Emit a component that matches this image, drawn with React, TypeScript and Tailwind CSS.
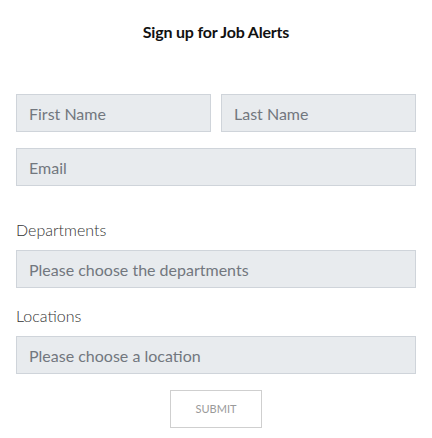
import React from "react";

export default function App() {
  const input =
    "h-[38px] w-full border border-[#cfd4da] bg-[#e8ebee] px-3 text-[16px] text-[#555] placeholder:text-[#72777e] outline-none";
  return (
    <div className="w-[432px] h-[438px] bg-white px-4 pt-[22px]" style={{ fontFamily: "Lato, 'Open Sans', sans-serif" }}>
      <h2 className="text-center text-[16px] font-bold leading-[20px] text-[#111] tracking-[-0.2px]">Sign up for Job Alerts</h2>
      <form className="mt-[52px] flex flex-col" onSubmit={(e) => e.preventDefault()}>
        <div className="flex gap-[10px]">
          <input className={input} placeholder="First Name" />
          <input className={input} placeholder="Last Name" />
        </div>
        <input className={input + " mt-4"} placeholder="Email" />
        <label className="mt-[34px] text-[16px] leading-[20px] text-[#333] font-light">Departments</label>
        <input className={input + " mt-[10px]"} placeholder="Please choose the departments" />
        <label className="mt-[18px] text-[16px] leading-[20px] text-[#333] font-light">Locations</label>
        <input className={input + " mt-[10px]"} placeholder="Please choose a location" />
        <div className="mt-4 flex justify-center">
          <button className="h-[38px] w-[92px] border border-[#cfcfcf] bg-white text-[11px] text-[#9a9a9a] uppercase">Submit</button>
        </div>
      </form>
    </div>
  );
}
